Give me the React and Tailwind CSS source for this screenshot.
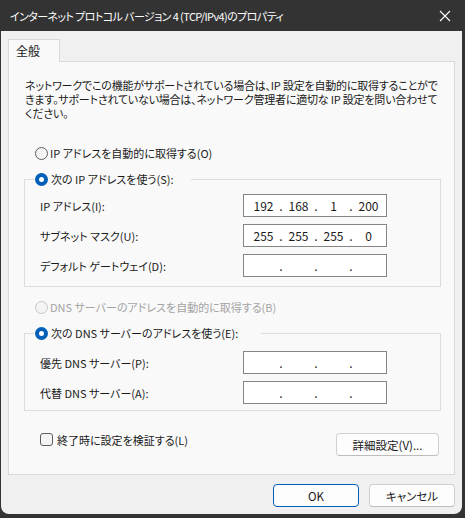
import React from 'react';

// Windows 11 style radio
const Radio = ({ checked, disabled }) =>
  checked ? (
    <span className="w-[13px] h-[13px] rounded-full bg-[#005fb8] flex items-center justify-center shrink-0">
      <span className="w-[5px] h-[5px] rounded-full bg-white" />
    </span>
  ) : (
    <span
      className={`w-[13px] h-[13px] rounded-full border bg-[#f4f4f4] shrink-0 ${
        disabled ? 'border-[#c6c6c6]' : 'border-[#5e5e5e]'
      }`}
    />
  );

// IP address box: 4 centred fields split by dots
const IpBox = ({ vals = [] }) => (
  <div className="w-[144px] h-[23px] border border-[#858585] bg-white flex items-center pl-[5px] text-[12px] leading-[16px] text-[#1a1a1a]">
    {[0, 1, 2, 3].map((i) => (
      <React.Fragment key={i}>
        {i > 0 && <span className="w-[6px] text-center">.</span>}
        <span className="w-[29px] text-center">{vals[i] ?? ''}</span>
      </React.Fragment>
    ))}
  </div>
);

const Row = ({ label, vals }) => (
  <div className="flex items-center">
    <span className="w-[203px] whitespace-nowrap">{label}</span>
    <IpBox vals={vals} />
  </div>
);

const Button = ({ children, primary, className = '' }) => (
  <button
    className={`h-[23px] rounded-[4px] border bg-[#fdfdfd] text-[11.5px] text-[#1a1a1a] flex items-center justify-center ${
      primary ? 'border-[#005fb8]' : 'border-[#d0d0d0] border-b-[#bcbcbc]'
    } ${className}`}
  >
    {children}
  </button>
);

export default function App() {
  return (
    <div className="w-[465px] h-[518px] bg-[#333333] flex flex-col pl-[1px] pr-[3px] pb-[4px] text-[11px] leading-[16px] text-[#1a1a1a] font-['Noto_Sans_CJK_JP','Noto_Sans',sans-serif] [font-feature-settings:'palt']">
      {/* title bar */}
      <div className="h-[31px] shrink-0 flex items-center justify-between pl-[9px] pr-[8px] text-white">
        <span className="whitespace-nowrap tracking-[-0.6px]">インターネット プロトコル バージョン 4 (TCP/IPv4)のプロパティ</span>
        <svg width="12" height="12" viewBox="0 0 12 12" className="mr-[3px]">
          <path d="M1 1L11 11M11 1L1 11" stroke="#ffffff" strokeWidth="1.1" />
        </svg>
      </div>

      {/* body */}
      <div className="flex-1 bg-[#f0f0f0] rounded-b-[8px] pt-[8px] px-[7px] flex flex-col">
        {/* tab */}
        <div className="flex">
          <div className="relative z-10 -mb-px h-[23px] w-[52px] border border-b-0 border-[#d9d9d9] bg-[#f9f9f9] pl-[7px] pt-[3px] text-[12px]">
            全般
          </div>
        </div>

        {/* tab panel */}
        <div className="border border-[#d9d9d9] bg-[#f9f9f9] pt-[16px] pb-[18px] flex flex-col">
          <p className="pl-[16px] leading-[14px] whitespace-nowrap tracking-[-0.2px]">
            ネットワークでこの機能がサポートされている場合は、IP 設定を自動的に取得することがで
            <br />
            きます。サポートされていない場合は、ネットワーク管理者に適切な IP 設定を問い合わせて
            <br />
            ください。
          </p>

          <div className="ml-[26px] mt-[25px] h-[16px] flex items-center gap-[2px]">
            <Radio />
            <span>IP アドレスを自動的に取得する(O)</span>
          </div>

          <fieldset className="ml-[15px] mr-[13px] mt-[10px] border border-[#dcdcdc] pb-[9px]">
            <legend className="ml-[9px] w-[157px] pl-[1px]">
              <span className="h-[16px] flex items-center gap-[3px]">
                <Radio checked />
                <span>次の IP アドレスを使う(S):</span>
              </span>
            </legend>
            <div className="pl-[15px] pt-[7px] flex flex-col gap-[7px]">
              <Row label="IP アドレス(I):" vals={['192', '168', '1', '200']} />
              <Row label="サブネット マスク(U):" vals={['255', '255', '255', '0']} />
              <Row label="デフォルト ゲートウェイ(D):" />
            </div>
          </fieldset>

          <div className="ml-[26px] mt-[12px] h-[16px] flex items-center gap-[2px] text-[#a3a3a3]">
            <Radio disabled />
            <span>DNS サーバーのアドレスを自動的に取得する(B)</span>
          </div>

          <fieldset className="ml-[15px] mr-[13px] mt-[10px] border border-[#dcdcdc] pb-[6px]">
            <legend className="ml-[9px] w-[227px] pl-[1px]">
              <span className="h-[16px] flex items-center gap-[3px]">
                <Radio checked />
                <span>次の DNS サーバーのアドレスを使う(E):</span>
              </span>
            </legend>
            <div className="pl-[15px] pt-[10px] flex flex-col gap-[7px]">
              <Row label="優先 DNS サーバー(P):" />
              <Row label="代替 DNS サーバー(A):" />
            </div>
          </fieldset>

          <div className="mt-[22px] ml-[31px] mr-[15px] flex items-start justify-between">
            <div className="flex items-center gap-[4px] h-[13px]">
              <span className="w-[13px] h-[13px] rounded-[3px] border border-[#5e5e5e] bg-[#f4f4f4]" />
              <span className="whitespace-nowrap">終了時に設定を検証する(L)</span>
            </div>
            <Button className="w-[103px]">詳細設定(V)...</Button>
          </div>
        </div>

        {/* dialog buttons */}
        <div className="mt-[9px] flex justify-end gap-[10px]">
          <Button primary className="w-[86px]">OK</Button>
          <Button className="w-[86px]">キャンセル</Button>
        </div>
      </div>
    </div>
  );
}
